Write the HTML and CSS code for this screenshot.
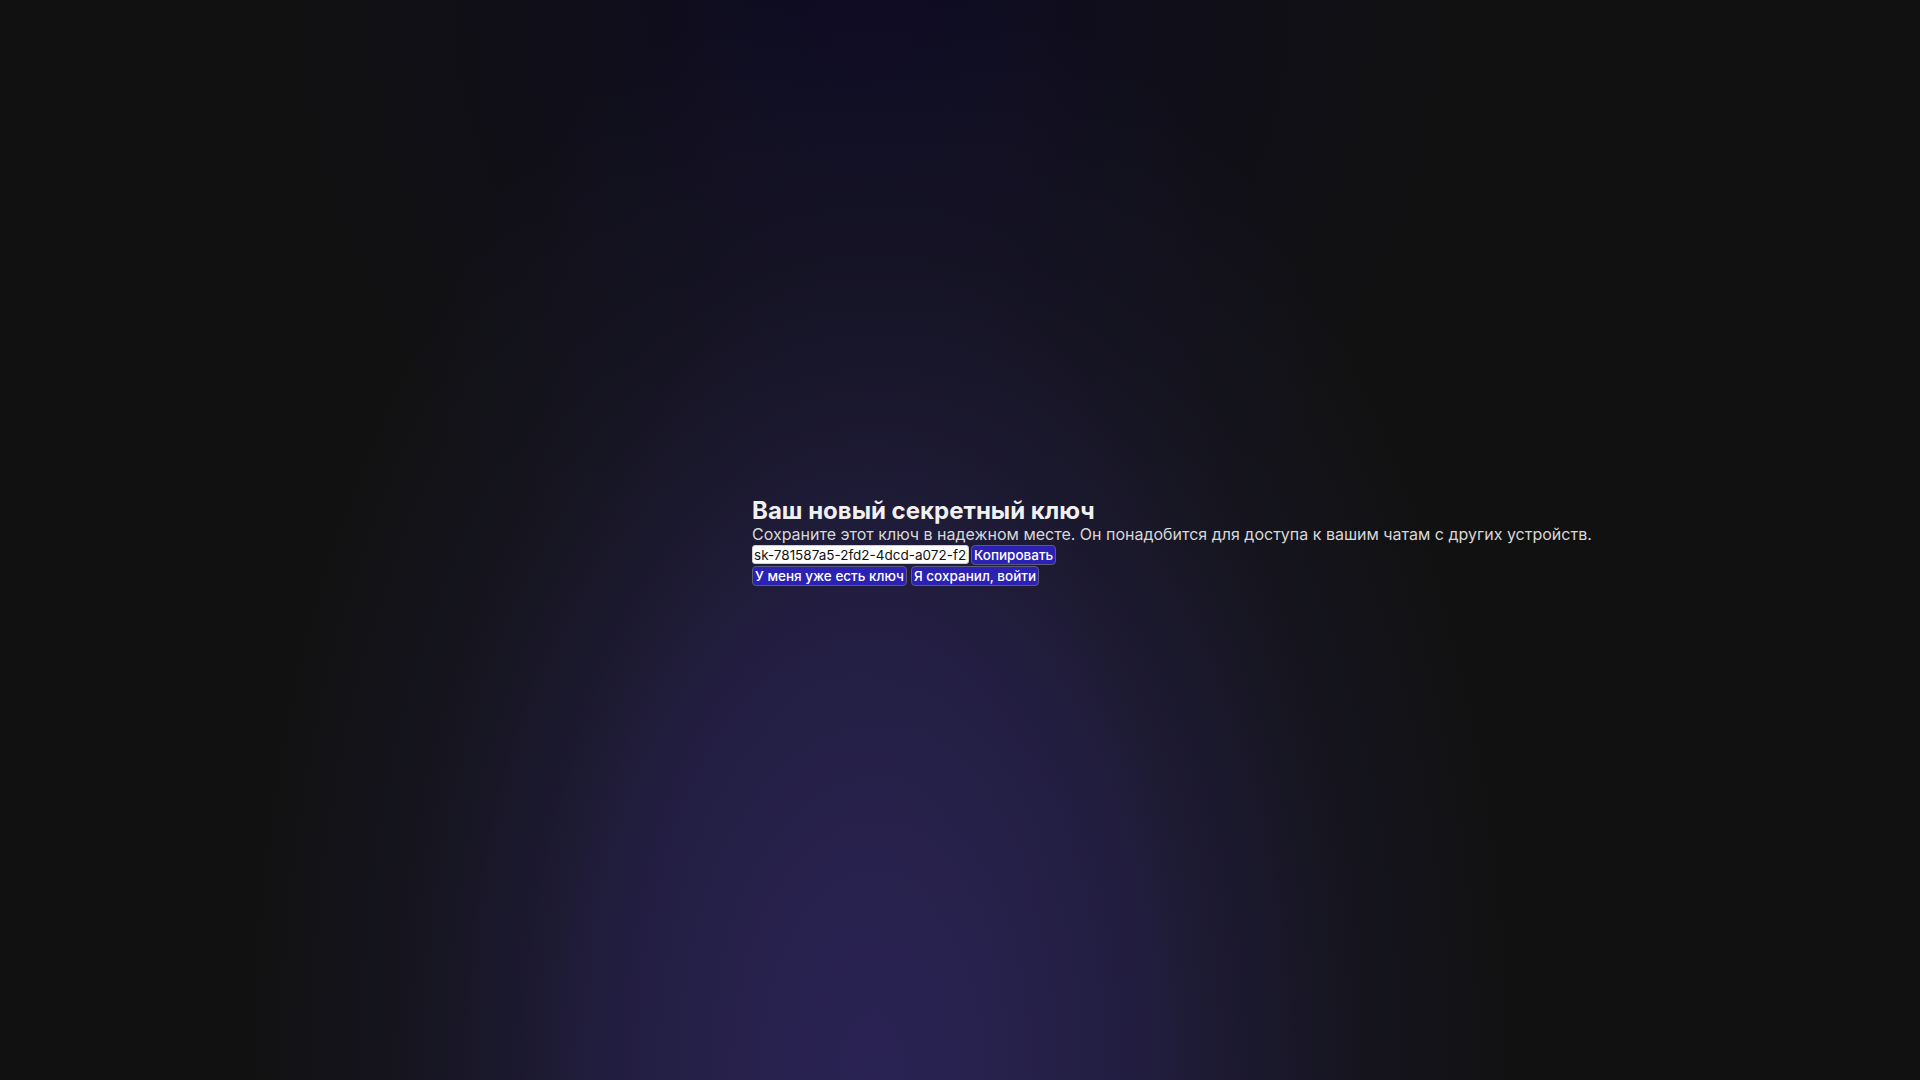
FILE: index.html
```html
<!DOCTYPE html>
<html lang="ru">
<head>
<meta charset="utf-8">
<title>Секретный ключ</title>
<link rel="stylesheet" href="styles.css">
</head>
<body>
<main class="page">
  <section class="key-card">
    <h2 class="title">Ваш новый секретный ключ</h2>
    <p class="subtitle">Сохраните этот ключ в надежном месте. Он понадобится для доступа к вашим чатам с других устройств.</p>
    <div class="key-row">
      <input class="key-input" type="text" readonly value="sk-781587a5-2fd2-4dcd-a072-f2b4c9e1d3a7">
      <button class="btn" type="button">Копировать</button>
    </div>
    <div class="actions">
      <button class="btn" type="button">У меня уже есть ключ</button>
      <button class="btn" type="button">Я сохранил, войти</button>
    </div>
  </section>
</main>
</body>
</html>
```
FILE: styles.css
```css
html, body {
  margin: 0;
  height: 100%;
}

body {
  background-color: #111111;
  background-image:
    radial-gradient(ellipse 330px 700px at 860px 1080px, rgba(44, 37, 88, 0.55) 0%, rgba(44, 37, 88, 0) 100%),
    radial-gradient(ellipse 780px 1350px at 880px 1080px, rgba(40, 34, 82, 0.95) 0%, rgba(36, 31, 70, 0.8) 35%, rgba(28, 26, 50, 0.45) 60%, rgba(17, 17, 17, 0) 82%),
    radial-gradient(ellipse 600px 620px at 870px 0px, rgba(14, 11, 36, 1) 0%, rgba(15, 13, 30, 0.65) 50%, rgba(17, 17, 17, 0) 100%);
  font-family: Inter, "Noto Sans", sans-serif;
  color: #eeeeee;
}

.page {
  min-height: 100vh;
  display: flex;
  align-items: center;
  padding-left: 752px;
  padding-top: 2px;
  box-sizing: border-box;
}

.key-card {
  display: flex;
  flex-direction: column;
  align-items: flex-start;
}

.title {
  margin: 0;
  font-size: 24px;
  line-height: 29px;
  font-weight: 700;
  color: #f0f0f0;
}

.subtitle {
  margin: 0;
  font-size: 16px;
  line-height: 19.5px;
  color: #d8d8d8;
  white-space: nowrap;
}

.key-row {
  display: flex;
  gap: 2px;
  align-items: center;
}

.actions {
  display: flex;
  gap: 4px;
  margin-top: 1px;
}

.key-input {
  width: 217px;
  height: 19px;
  box-sizing: border-box;
  padding: 0 1px;
  border: 1px solid #cfcfcf;
  border-radius: 3px;
  background: #ffffff;
  color: #111111;
  font-family: Inter, "Noto Sans", sans-serif;
  font-size: 13.5px;
}

.btn {
  height: 20px;
  box-sizing: border-box;
  padding: 0 2px;
  border: 1px solid #5c5c78;
  border-radius: 4px;
  background: #2b21b3;
  color: #ffffff;
  font-family: Inter, "Noto Sans", sans-serif;
  font-size: 13.5px;
  font-weight: 500;
  line-height: 18px;
}
```
